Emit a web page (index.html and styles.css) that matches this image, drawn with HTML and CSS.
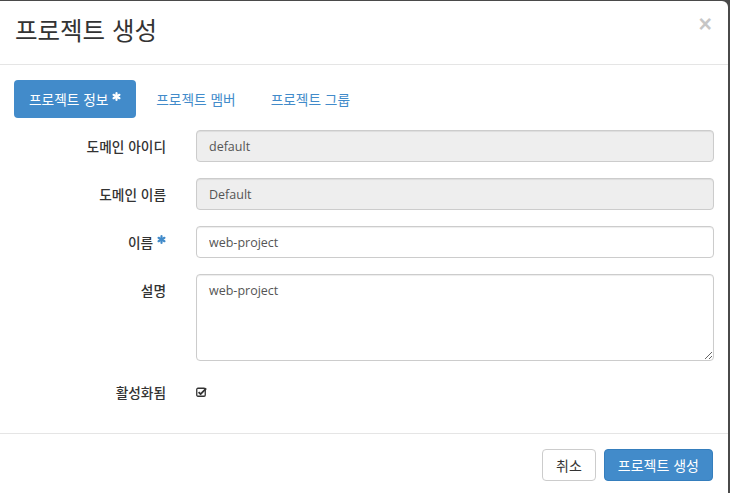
FILE: index.html
```html
<!DOCTYPE html>
<html lang="ko">
<head>
<meta charset="utf-8">
<title>프로젝트 생성</title>
<link rel="stylesheet" href="styles.css">
</head>
<body>
<div class="modal">
  <div class="modal-header">
    <h4 class="modal-title">프로젝트 생성</h4>
    <button class="close" type="button">&times;</button>
  </div>
  <div class="modal-body">
    <ul class="nav-pills">
      <li class="pill active">프로젝트 정보 <svg class="ast" viewBox="0 0 10 10"><g stroke="currentColor" stroke-width="2.4" stroke-linecap="round"><line x1="5" y1="1.2" x2="5" y2="8.8"/><line x1="1.7" y1="3.1" x2="8.3" y2="6.9"/><line x1="1.7" y1="6.9" x2="8.3" y2="3.1"/></g></svg></li>
      <li class="pill">프로젝트 멤버</li>
      <li class="pill">프로젝트 그룹</li>
    </ul>
    <form class="form">
      <div class="row">
        <label class="label">도메인 아이디</label>
        <input class="control" type="text" value="default" disabled>
      </div>
      <div class="row">
        <label class="label">도메인 이름</label>
        <input class="control" type="text" value="Default" disabled>
      </div>
      <div class="row">
        <label class="label">이름 <svg class="ast req" viewBox="0 0 10 10"><g stroke="currentColor" stroke-width="2.4" stroke-linecap="round"><line x1="5" y1="1.2" x2="5" y2="8.8"/><line x1="1.7" y1="3.1" x2="8.3" y2="6.9"/><line x1="1.7" y1="6.9" x2="8.3" y2="3.1"/></g></svg></label>
        <input class="control" type="text" value="web-project">
      </div>
      <div class="row">
        <label class="label">설명</label>
        <textarea class="control area">web-project</textarea>
      </div>
      <div class="row check-row">
        <label class="label">활성화됨</label>
        <svg class="check" viewBox="0 0 11 10"><rect x="0.75" y="1.25" width="8.5" height="8" rx="1.2" fill="none" stroke="#333" stroke-width="1.3"/><path d="M2.6 5.2 L4.6 7.2 L10.2 1.4" fill="none" stroke="#333" stroke-width="1.8" stroke-linejoin="round"/></svg>
      </div>
    </form>
  </div>
  <div class="modal-footer">
    <button class="btn btn-default" type="button">취소</button>
    <button class="btn btn-primary" type="button">프로젝트 생성</button>
  </div>
</div>
</body>
</html>
```

FILE: styles.css
```css
* { box-sizing: border-box; }
html, body { margin: 0; padding: 0; }
body {
  background: #4a4a4a;
  font-family: "Noto Sans CJK KR", "Open Sans", sans-serif;
  font-size: 13.7px;
  color: #333;
  height: 493px;
  overflow: hidden;
}
.modal {
  margin-top: 1px;
  width: 728px;
  height: 520px;
  background: #fff;
  border-radius: 0 6px 0 0;
  display: flex;
  flex-direction: column;
}
.modal-header {
  height: 64px;
  padding: 0 15px 4px 15px;
  border-bottom: 1px solid #e5e5e5;
  display: flex;
  align-items: center;
  justify-content: space-between;
}
.modal-title {
  margin: 0;
  font-size: 24.5px;
  font-weight: 400;
  color: #333;
  line-height: 1;
}
.close {
  border: 0;
  background: none;
  padding: 0;
  margin: -12px 1px 0 0;
  font-family: "Liberation Sans", Arial, sans-serif;
  font-size: 23px;
  font-weight: 700;
  line-height: 1;
  color: #000;
  opacity: 0.22;
}
.modal-body {
  padding: 15px 15px 0 14px;
}
.nav-pills {
  list-style: none;
  margin: 0;
  padding: 0;
  display: flex;
}
.pill {
  height: 38px;
  padding: 0 15px;
  display: flex;
  align-items: center;
  color: #428bca;
  border-radius: 4px;
  white-space: pre;
}
.pill + .pill { margin-left: 5px; }
.pill.active {
  background: #428bca;
  color: #fff;
}
.ast { width: 9px; height: 9px; margin-top: -5px; }
.req { color: #428bca; }
.form {
  margin-top: 12px;
  display: flex;
  flex-direction: column;
  gap: 16px;
}
.row {
  display: grid;
  grid-template-columns: 167px 1fr;
  column-gap: 15px;
  align-items: start;
}
.label {
  font-weight: 500;
  padding-top: 6px;
  padding-right: 15px;
  line-height: 20px;
  display: flex;
  justify-content: flex-end;
  align-items: center;
  white-space: pre;
}
.label .ast { margin-top: -6px; }
.control {
  height: 32px;
  width: 518px;
  border: 1px solid #ccc;
  border-radius: 4px;
  padding: 5px 12px;
  font-family: "Open Sans", "Noto Sans CJK KR", sans-serif;
  font-size: 12.5px;
  color: #555;
  background: #fff;
  box-shadow: inset 0 1px 1px rgba(0,0,0,.075);
}
.control:disabled {
  background: #eee;
  color: #555;
  -webkit-text-fill-color: #555;
  opacity: 1;
}
.area {
  height: 87px;
  resize: vertical;
  padding-top: 7px;
  line-height: 18px;
}
.check-row { align-items: center; margin-top: 5px; }
.check-row .label { padding-top: 0; }
.check { width: 11px; height: 10px; }
.modal-footer {
  margin-top: 31px;
  border-top: 1px solid #e5e5e5;
  padding: 15px;
  display: flex;
  justify-content: flex-end;
  gap: 8px;
}
.btn {
  height: 32px;
  padding: 0 13px;
  font-family: "Noto Sans CJK KR", sans-serif;
  font-size: 14px;
  border-radius: 4px;
  border: 1px solid transparent;
  line-height: 1;
}
.btn-default {
  background: #fff;
  border-color: #ccc;
  color: #333;
}
.btn-primary {
  background: #428bca;
  border-color: #357ebd;
  color: #fff;
}
```
